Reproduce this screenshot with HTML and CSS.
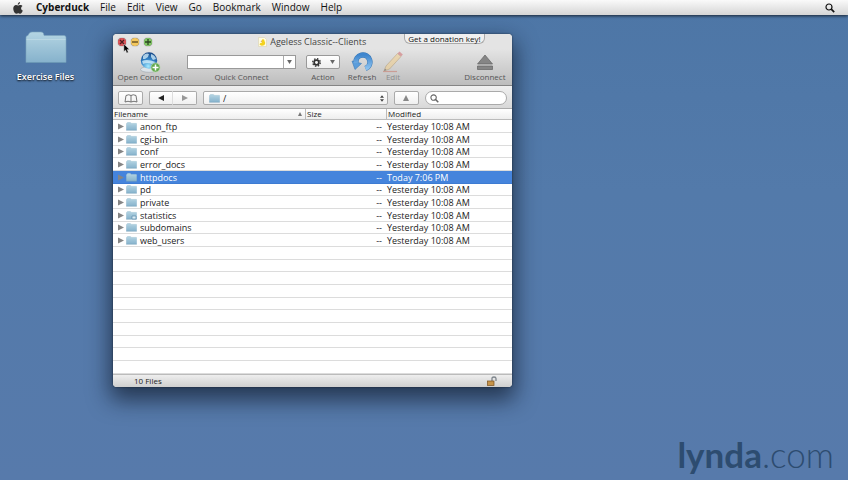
FILE: index.html
```
<!DOCTYPE html>
<html lang="en">
  <head>
    <meta charset="UTF-8" />
    <meta name="viewport" content="width=device-width, initial-scale=1.0" />
    <title>Cyberduck</title>
    <link rel="stylesheet" href="styles.css">
  </head>
  <body>
    <!-- Shared icons -->
    <svg class="defs" aria-hidden="true">
      <defs>
        <linearGradient id="folder-fill" x1="0" y1="0" x2="0" y2="1">
          <stop offset="0" stop-color="#b4d5e3" />
          <stop offset="1" stop-color="#86b2cc" />
        </linearGradient>
        <radialGradient id="globe-fill" cx=".45" cy=".85" r=".85">
          <stop offset="0" stop-color="#a5eaff" />
          <stop offset=".5" stop-color="#3586c9" />
          <stop offset="1" stop-color="#174786" />
        </radialGradient>
        <linearGradient id="refresh-fill" x1="0" y1="0" x2="0" y2="1">
          <stop offset="0" stop-color="#3f86ce" />
          <stop offset="1" stop-color="#8bc1ee" />
        </linearGradient>
        <symbol id="folder" viewBox="0 0 42 33">
          <path d="M1 6 Q1 4 3 4 L4 2 Q5 .5 7 .5 H16 Q18 .5 18.500 2 L19 4 H39 Q41 4 41 6 V31 H1Z" fill="url(#folder-fill)" stroke="#7ca5be" stroke-width=".6" />
          <path d="M1.500 8 H40.500" stroke="#c0dae6" stroke-width=".8" />
          <path d="M1 31 H41" stroke="#6b98b6" stroke-width="1.200" />
        </symbol>
        <symbol id="magnifier" viewBox="0 0 10 10">
          <circle cx="4" cy="4" r="3" fill="none" stroke="currentColor" stroke-width="1.200" />
          <path d="M6.200 6.200 L9.200 9.200" stroke="currentColor" stroke-width="1.700" />
        </symbol>
      </defs>
    </svg>

    <!-- Menu bar -->
    <header class="menubar">
      <svg class="apple" viewBox="0 0 20 24" aria-label="Apple">
        <path d="M14 0 C14 3 12 5.500 9.500 5.500 C9.300 2.800 11.500 .4 14 0Z M10 7 C11.500 7 13 5.700 15 5.800 C17 5.900 18.300 6.800 19 8 C15 10.500 15.500 15.500 19.600 17 C18.500 20 16.500 23.500 14.300 23.500 C12.800 23.500 12.200 22.600 10.500 22.600 C8.800 22.600 8 23.500 6.700 23.500 C3.500 23.500 .5 17.500 .5 13 C.5 8.500 3.300 6 6 6 C7.800 6 9 7 10 7Z" />
      </svg>
      <nav class="menus">
        <a href="#" class="app-name">Cyberduck</a>
        <a href="#">File</a>
        <a href="#">Edit</a>
        <a href="#">View</a>
        <a href="#">Go</a>
        <a href="#">Bookmark</a>
        <a href="#">Window</a>
        <a href="#">Help</a>
      </nav>
      <button class="spotlight" aria-label="Spotlight"><svg><use href="#magnifier" /></svg></button>
    </header>

    <main class="desktop">
      <a href="#" class="desktop-item">
        <svg><use href="#folder" /></svg>
        <span>Exercise Files</span>
      </a>

      <!-- Browser window -->
      <section class="window">
        <div class="titlebar">
          <div class="lights">
            <button class="light red" aria-label="Close"><svg viewBox="0 0 8 8"><path d="M2 2 L6 6 M6 2 L2 6" /></svg></button>
            <button class="light yellow" aria-label="Minimize"><svg viewBox="0 0 8 8"><path d="M1 4 H7" /></svg></button>
            <button class="light green" aria-label="Zoom"><svg viewBox="0 0 8 8"><path d="M1 4 H7 M4 1 V7" /></svg></button>
          </div>
          <h1 class="title">
            <svg viewBox="0 0 9 10">
              <path d="M.5 .5 H6.500 L8.500 2.500 V9.500 H.5Z" fill="#fffbe0" stroke="#d5cda8" stroke-width=".5" />
              <path d="M4 2.500 Q6.500 1.500 6.500 4 Q8 6 6.500 8 Q3 9.500 1.500 7.500 Q1.500 6 4 5.500Z" fill="#f3d21d" />
              <path d="M4 3.500 L2.500 4.300 L4 4.700Z" fill="#c88318" />
            </svg>
            Ageless Classic--Clients
          </h1>
          <button class="donate">Get a donation key!</button>
        </div>

        <!-- Toolbar -->
        <div class="toolbar">
          <button class="tool tool-open">
            <svg class="tool-icon" viewBox="0 0 22 22">
              <ellipse cx="10" cy="18.500" rx="8.500" ry="2.800" fill="#dce3e8" stroke="#9ea8af" stroke-width=".6" />
              <circle cx="10" cy="9.500" r="8.200" fill="url(#globe-fill)" />
              <path d="M4 5 Q7 1.500 10 3 L9 6 L6 8 L4 8Z M12 3 Q16 4 17 8 L14 9 L12 6Z M3 10 Q8 7.500 16.500 11 L13 13 Q8 11 4 13Z" fill="#d8f1fc" opacity=".75" />
              <circle cx="16.500" cy="16.500" r="4.500" fill="#62a94d" stroke="#b4d8a7" stroke-width=".7" />
              <path d="M16.500 13.500 V19.500 M13.500 16.500 H19.500" stroke="#fff" stroke-width="1.500" />
            </svg>
            <span>Open Connection</span>
          </button>
          <div class="tool tool-quick">
            <div class="combo">
              <input id="quick" type="text">
              <button aria-label="Show history"><svg class="caret" viewBox="0 0 6 5"><path d="M0 0 H6 L3 5Z" /></svg></button>
            </div>
            <label for="quick">Quick Connect</label>
          </div>
          <div class="tool tool-action">
            <button id="action" class="action-button" aria-label="Action">
              <svg class="gear" viewBox="0 0 10 10">
                <circle cx="5" cy="5" r="2.600" fill="none" stroke="#333" stroke-width="1.900" />
                <circle cx="5" cy="5" r="4.200" fill="none" stroke="#333" stroke-width="1.500" stroke-dasharray="1.650 1.650" />
              </svg>
              <svg class="caret" viewBox="0 0 6 5"><path d="M0 0 H6 L3 5Z" /></svg>
            </button>
            <label for="action">Action</label>
          </div>
          <button class="tool tool-refresh">
            <svg class="tool-icon" viewBox="0 0 22 22">
              <path d="M5 12 A7 7 0 1 1 14.500 17.500" fill="none" stroke="#3978b6" stroke-width="5.400" />
              <path d="M1 10 L10.500 12.500 L4 18.500Z" fill="#5b9ddb" stroke="#3978b6" stroke-width=".6" />
              <path d="M5 12 A7 7 0 1 1 14.500 17.500" fill="none" stroke="url(#refresh-fill)" stroke-width="4.500" />
            </svg>
            <span>Refresh</span>
          </button>
          <button class="tool tool-edit" disabled>
            <svg class="tool-icon" viewBox="0 0 22 22">
              <path d="M1 20.500 H15" stroke="#c96f60" stroke-width="1.200" />
              <path d="M2 20 L4 15 L15.500 2.500 L19 5.500 L7.500 18Z" fill="#f5cf86" stroke="#a5834b" stroke-width=".7" />
              <path d="M15.500 2.500 L17.500 .6 L20.800 3.400 L19 5.500Z" fill="#cf5f62" />
              <path d="M2 20 L3 17.500 L4.500 18.900Z" fill="#444" />
            </svg>
            <span>Edit</span>
          </button>
          <button class="tool tool-disconnect">
            <svg class="tool-icon" viewBox="0 0 22 22">
              <path d="M11 4 L18.500 13 H3.500Z M3.500 15 H18.500 V18.500 H3.500Z" fill="#858585" stroke="#636363" stroke-width=".7" />
            </svg>
            <span>Disconnect</span>
          </button>
        </div>

        <!-- Navigation bar -->
        <div class="navbar">
          <button class="control bookmarks" aria-label="Bookmarks">
            <svg viewBox="0 0 14 9"><path d="M7 8 Q4 6.500 1 8 L2 1.500 Q5 0 7 1.500 Q9 0 12 1.500 L13 8 Q10 6.500 7 8Z M7 1.500 V8" fill="none" stroke="#666" stroke-width=".9" /></svg>
          </button>
          <div class="history">
            <button class="control" aria-label="Back"><svg viewBox="0 0 6 6"><path d="M6 0 V6 L0 3Z" fill="#222" /></svg></button>
            <button class="control" aria-label="Forward"><svg viewBox="0 0 6 6"><path d="M0 0 V6 L6 3Z" fill="#999" /></svg></button>
          </div>
          <div class="control path">
            <svg class="path-folder"><use href="#folder" /></svg>
            <select aria-label="Path"><option>/</option></select>
            <svg class="stepper" viewBox="0 0 5 8"><path d="M0 3 L2.500 0 L5 3Z M0 5 H5 L2.500 8Z" /></svg>
          </div>
          <button class="control up" aria-label="Parent folder"><svg viewBox="0 0 6 6"><path d="M3 0 L6 6 H0Z" fill="#888" /></svg></button>
          <div class="search">
            <svg><use href="#magnifier" /></svg>
            <input type="search" aria-label="Search">
          </div>
        </div>

        <!-- File list -->
        <table class="files">
          <colgroup>
            <col class="col-name">
            <col class="col-size">
            <col class="col-date">
          </colgroup>
          <thead>
            <tr>
              <th class="sorted">Filename</th>
              <th>Size</th>
              <th>Modified</th>
            </tr>
          </thead>
          <tbody id="file-rows"></tbody>
        </table>

        <footer class="statusbar">
          <span>10 Files</span>
          <svg viewBox="0 0 10 10">
            <path d="M5 5 V2.500 Q5 1 7 1 Q9 1 9 2.500 V5" fill="none" stroke="#7e858c" stroke-width="1.300" />
            <rect x=".5" y="5" width="6.500" height="4.500" fill="#c5934a" stroke="#79511e" stroke-width=".7" />
          </svg>
        </footer>
      </section>

      <svg class="cursor" viewBox="0 0 8 12">
        <path d="M1 .8 V9.500 L3 7.700 L4.300 11 L6 10.300 L4.700 7.200 H7.300Z" fill="#000" stroke="#ddd" stroke-width=".5" />
      </svg>

      <div class="watermark"><b>lynda</b>.com</div>
    </main>

    <script>
      const names = ["anon_ftp", "cgi-bin", "conf", "error_docs", "httpdocs",
        "pd", "private", "statistics", "subdomains", "web_users"];
      const rowCount = 20; // the list keeps its ruling below the last file
      const rows = document.getElementById("file-rows");

      for (let i = 0; i < rowCount; i++) {
        const row = document.createElement("tr");
        const name = names[i];
        if (name) {
          const selected = name === "httpdocs";
          if (selected) row.className = "selected";
          const badge = name === "statistics" ? '<path d="M6 5 H10 V8 H6Z" fill="#d9edf6" stroke="#5d8ba9" stroke-width=".7" />' : "";
          row.innerHTML = `
            <td><div class="file">
              <svg class="disclosure" viewBox="0 0 6 6"><path d="M0 0 V6 L6 3Z" /></svg>
              <svg class="file-folder"><use href="#folder" />${badge}</svg>
              <span>${name}</span>
            </div></td>
            <td class="size">--</td>
            <td>${selected ? "Today 7:06 PM" : "Yesterday 10:08 AM"}</td>`;
        } else {
          row.innerHTML = "<td></td><td></td><td></td>";
        }
        rows.appendChild(row);
      }
    </script>
  </body>
</html>
```
FILE: styles.css
```
/* General styles */
* {
    box-sizing: border-box;
}

body {
    margin: 0;
    height: 100vh;
    display: flex;
    flex-direction: column;
    overflow: hidden;
    font-family: "Open Sans", "Noto Sans", sans-serif;
    font-size: 9px;
    color: #222;
    background: linear-gradient(#4d76a6, #537aaa 40%, #577aab);
}

button,
input,
select {
    font: inherit;
    color: inherit;
    margin: 0;
    padding: 0;
    border: none;
    background: none;
    outline: none;
    appearance: none;
}

a {
    color: inherit;
    text-decoration: none;
}

svg {
    display: block;
    flex: none;
}

.defs {
    position: absolute;
    width: 0;
    height: 0;
}

/* Menu bar */
.menubar {
    display: flex;
    align-items: center;
    height: 15px;
    padding: 0 13px;
    font-size: 10px;
    line-height: 14px;
    color: #111;
    background: linear-gradient(#fafafa, #d5d5d5);
    box-shadow: 0 1px 3px rgba(0, 0, 0, 0.7);
    z-index: 1;
}

.apple {
    width: 10px;
    height: 12px;
    fill: #333;
}

.menus {
    display: flex;
    gap: 11px;
    margin: 0 0 1px 13px;
    font-weight: 500;
}

.app-name {
    font-weight: bold;
}

.spotlight {
    margin-left: auto;
}

.spotlight svg {
    width: 10px;
    height: 10px;
}

/* Desktop */
.desktop {
    position: relative;
    flex: 1;
}

.desktop-item {
    position: absolute;
    left: 10px;
    top: 16px;
    width: 71px;
    display: flex;
    flex-direction: column;
    align-items: center;
    gap: 6px;
    color: #fff;
    font-weight: 600;
    line-height: 12px;
    white-space: nowrap;
    text-shadow: 0 1px 2px #000;
}

.desktop-item svg {
    width: 42px;
    height: 34px;
}

/* Browser window */
.window {
    position: absolute;
    left: 113px;
    top: 19px;
    width: 47%;
    border-radius: 4px;
    background: #fff;
    box-shadow: 0 0 2px rgba(0, 0, 0, 0.6), 0 10px 22px 3px rgba(10, 20, 35, 0.65);
}

.titlebar {
    display: grid;
    grid-template-columns: 1fr auto 1fr;
    align-items: center;
    height: 15px;
    padding: 0 5px;
    border-radius: 4px 4px 0 0;
    background: #e4e4e4;
}

.lights {
    display: flex;
    gap: 5px;
}

.light {
    width: 8px;
    height: 8px;
    border-radius: 50%;
    box-shadow: 0 0 1px #333;
}

.light svg {
    width: 8px;
    height: 8px;
    fill: none;
    stroke: rgba(0, 0, 0, 0.65);
    stroke-width: 1.3;
}

.red {
    background: #e0555a;
}

.yellow {
    background: #f4c75c;
}

.green {
    background: #82ca64;
}

.title {
    display: flex;
    align-items: center;
    gap: 3px;
    margin: 0;
    font-size: 9px;
    font-weight: normal;
    color: #444;
}

.title svg {
    width: 9px;
    height: 10px;
}

.donate {
    justify-self: end;
    align-self: start;
    height: 10px;
    margin-right: 22px;
    padding: 0 3px;
    border: 1px solid #aaa;
    border-top: none;
    border-radius: 0 0 6px 6px;
    background: #f0f0f0;
    font-size: 8px;
    line-height: 9px;
    color: #111;
}

/* Toolbar */
.toolbar {
    display: flex;
    height: 37px;
    padding: 2px 6px 0;
    border-bottom: 1px solid #858585;
    background: linear-gradient(#e4e4e4, #bdbdbd);
    font-size: 8px;
    line-height: 8px;
    color: #555;
}

.tool {
    display: flex;
    flex-direction: column;
    align-items: center;
    white-space: nowrap;
}

.tool-icon {
    width: 22px;
    height: 22px;
}

.tool-open {
    width: 62px;
}

.tool-quick {
    width: 109px;
    margin-left: 6px;
}

.combo {
    display: flex;
    width: 100%;
    height: 14px;
    margin: 4px 0;
    border: 1px solid #999;
    background: #fff;
}

.combo input {
    flex: 1;
    min-width: 0;
}

.combo button {
    width: 12px;
    padding-left: 3px;
    border-left: 1px solid #aaa;
}

.caret {
    width: 5px;
    height: 4px;
    fill: #666;
}

.tool-action {
    width: 34px;
    margin-left: 10px;
}

.action-button {
    display: flex;
    align-items: center;
    justify-content: space-between;
    width: 100%;
    height: 14px;
    margin: 4px 0;
    padding: 0 4px 0 5px;
    border: 1px solid #999;
    border-radius: 2px;
    background: linear-gradient(#fff, #eee);
}

.gear {
    width: 9px;
    height: 9px;
}

.tool-refresh {
    width: 28px;
    margin-left: 8px;
}

.tool-edit {
    width: 22px;
    margin-left: 6px;
    opacity: 0.5;
}

.tool-disconnect {
    margin-left: auto;
}

/* Navigation bar */
.navbar {
    display: flex;
    align-items: center;
    gap: 6px;
    height: 23px;
    padding: 2px 5px 0;
    border-bottom: 1px solid #aaa;
    background: linear-gradient(#f0f0f0, #d8d8d8);
}

.control {
    display: flex;
    align-items: center;
    justify-content: center;
    width: 25px;
    height: 14px;
    border: 1px solid #aaa;
    border-radius: 2px;
    background: linear-gradient(#fff, #f0f0f0);
}

.control svg {
    width: 6px;
    height: 6px;
}

.bookmarks svg {
    width: 14px;
    height: 9px;
}

.history {
    display: flex;
}

.history .control {
    width: 24px;
}

.history .control:first-child {
    border-right-color: #ddd;
    border-radius: 2px 0 0 2px;
}

.history .control:last-child {
    border-left: none;
    border-radius: 0 2px 2px 0;
}

.path {
    flex: 1;
    padding: 0 3px 0 5px;
    gap: 3px;
}

.path select {
    flex: 1;
}

.path .path-folder {
    width: 11px;
    height: 9px;
}

.path .stepper {
    width: 4px;
    height: 7px;
    fill: #444;
}

.search {
    display: flex;
    align-items: center;
    width: 82px;
    height: 14px;
    padding: 0 4px;
    border: 1px solid #aaa;
    border-radius: 7px;
    background: #fff;
    color: #666;
}

.search svg {
    width: 9px;
    height: 9px;
}

.search input {
    flex: 1;
    min-width: 0;
}

/* File list */
.files {
    width: 100%;
    table-layout: fixed;
    border-collapse: separate;
    border-spacing: 0;
    line-height: 11px;
}

.col-name {
    width: 192px;
}

.col-size {
    width: 81px;
}

.files th {
    height: 11px;
    padding: 0 1px;
    border-bottom: 1px solid #bbb;
    background: linear-gradient(#fff, #eee);
    font-size: 8px;
    font-weight: normal;
    line-height: 10px;
    text-align: left;
}

.files th + th {
    border-left: 1px solid #bbb;
}

.sorted::after {
    content: "";
    float: right;
    margin: 3px 2px 0 0;
    border: 2px solid transparent;
    border-top: none;
    border-bottom: 4px solid #777;
}

.files td {
    height: 13px;
    padding: 0 1px;
    border-bottom: 1px solid #dcdcdc;
    white-space: nowrap;
}

.files tr:nth-child(3n) td {
    height: 12px;
}

.files .size {
    padding-right: 4px;
    text-align: right;
}

.file {
    display: flex;
    align-items: center;
    height: 11px;
    padding-left: 4px;
}

.disclosure {
    width: 6px;
    height: 7px;
    fill: #858585;
}

.file-folder {
    width: 11px;
    height: 9px;
    margin: 0 3px 0 2px;
}

.files .selected td {
    border-bottom-color: #3d7bd2;
    background: #4584dc;
    color: #fff;
}

/* Status bar */
.statusbar {
    display: flex;
    align-items: center;
    justify-content: space-between;
    height: 13px;
    padding: 0 15px 1px 21px;
    border-top: 1px solid #bbb;
    border-radius: 0 0 4px 4px;
    background: linear-gradient(#eee, #cfcfcf);
    font-size: 8px;
    line-height: 10px;
}

.statusbar svg {
    width: 10px;
    height: 10px;
}

/* Mouse pointer */
.cursor {
    position: absolute;
    left: 123px;
    top: 28px;
    width: 7px;
    height: 11px;
}

/* Watermark */
.watermark {
    position: absolute;
    right: 14px;
    bottom: 5px;
    font-family: Lato, sans-serif;
    font-size: 35px;
    font-weight: 300;
    line-height: 42px;
    color: #2d4c70;
}

.watermark b {
    font-weight: 700;
}
```
